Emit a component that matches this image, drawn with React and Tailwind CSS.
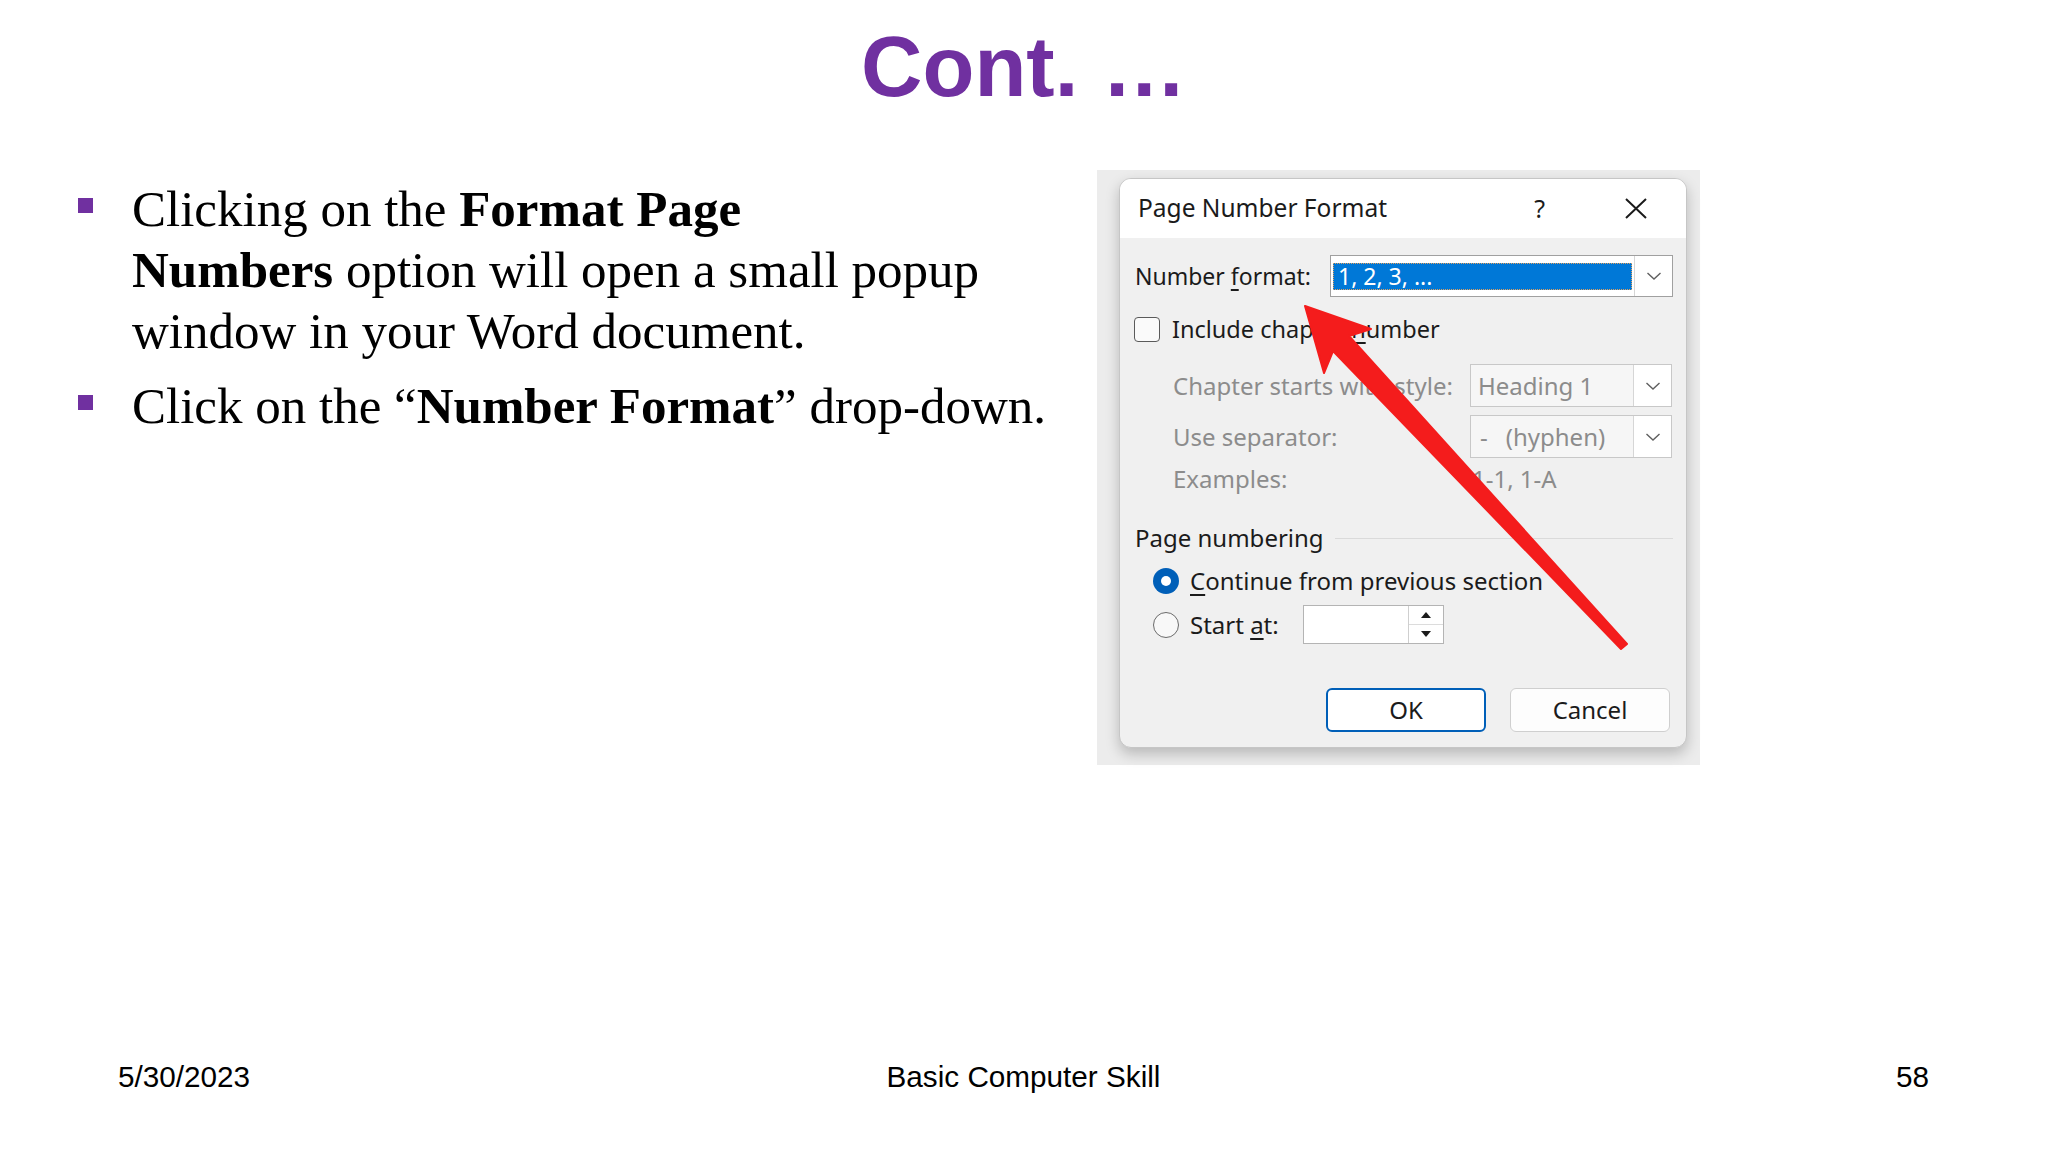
import React from 'react';

const Chevron = () => (
  <svg width="16" height="10" viewBox="0 0 16 10">
    <path d="M1.5 2 L8 8 L14.5 2" fill="none" stroke="#5f5f5f" strokeWidth="1.4" />
  </svg>
);

const SpinArrow = ({ up }) => (
  <svg width="10" height="6" viewBox="0 0 10 6">
    <path d={up ? 'M5 0 L10 6 L0 6 Z' : 'M0 0 L10 0 L5 6 Z'} fill="#1b1b1b" />
  </svg>
);

// red annotation arrow drawn over the dialog screenshot
const RedArrow = () => (
  <svg className="absolute inset-0 pointer-events-none" width="603" height="595" viewBox="0 0 603 595">
    <polygon
      points="208,136 274,159 252,166 530,474 524,479 236,181 227,203"
      fill="#f41c1c"
      strokeLinejoin="round"
      stroke="#f41c1c"
      strokeWidth="2"
    />
  </svg>
);

function Bullet({ children, className = '' }) {
  return (
    <li className={`flex ${className}`}>
      <span className="w-[15px] h-[15px] mt-[19px] bg-[#7030a0] shrink-0" />
      <span className="ml-[39px] whitespace-nowrap">{children}</span>
    </li>
  );
}

function PageNumberDialog() {
  return (
    <div className="relative w-[603px] h-[595px] bg-[#ececec] pl-[22px] pt-[8px]">
      <div className="w-[568px] h-[570px] rounded-[12px] border border-[#c6c6c6] bg-[#f0f0f0] overflow-hidden shadow-[0_6px_14px_rgba(0,0,0,0.22)] font-['Noto_Sans',sans-serif] text-[#1b1b1b] text-[24px] leading-none">
        {/* title bar */}
        <div className="h-[59px] bg-white flex items-center pl-[18px] pr-[39px]">
          <span className="text-[24.5px]">Page Number Format</span>
          <span className="ml-auto text-[25px]">?</span>
          <svg className="ml-[80px]" width="22" height="21" viewBox="0 0 22 21">
            <path d="M1 1 L21 20 M21 1 L1 20" stroke="#1b1b1b" strokeWidth="2" />
          </svg>
        </div>

        {/* number format */}
        <div className="mt-[17px] h-[42px] flex items-center pl-[15px] pr-[13px]">
          <span className="text-[23px]">
            Number <u className="underline-offset-4">f</u>ormat:
          </span>
          <div className="ml-auto w-[343px] h-[42px] border border-[#a0a0a0] bg-white flex items-center">
            <div className="ml-[2px] w-[299px] h-[27px] bg-[#0078d7] border border-dotted border-[#e0a060] text-white text-[23px] flex items-center pl-[4px]">
              1, 2, 3, ...
            </div>
            <div className="ml-auto w-[38px] h-full border-l border-[#d6d6d6] flex items-center justify-center">
              <Chevron />
            </div>
          </div>
        </div>

        {/* include chapter number */}
        <div className="mt-[20px] h-[25px] flex items-center pl-[14px]">
          <span className="w-[26px] h-[25px] rounded-[4px] border-[1.5px] border-[#5a5a5a] bg-[#fafafa]" />
          <span className="ml-[12px] text-[23.5px]">
            Include chapter <u className="underline-offset-4">n</u>umber
          </span>
        </div>

        {/* chapter style */}
        <div className="mt-[22px] h-[43px] flex items-center pl-[53px] pr-[14px] text-[#8c8c8c]">
          <span>Chapter starts with style:</span>
          <div className="ml-auto w-[202px] h-[43px] border border-[#c8c8c8] bg-[#f6f6f6] flex items-center">
            <span className="pl-[7px]">Heading 1</span>
            <div className="ml-auto w-[38px] h-full border-l border-[#d6d6d6] bg-white flex items-center justify-center">
              <Chevron />
            </div>
          </div>
        </div>

        {/* separator */}
        <div className="mt-[8px] h-[43px] flex items-center pl-[53px] pr-[14px] text-[#8c8c8c]">
          <span>Use separator:</span>
          <div className="ml-auto w-[202px] h-[43px] border border-[#c8c8c8] bg-[#f6f6f6] flex items-center">
            <span className="pl-[9px]">-</span>
            <span className="ml-[18px]">(hyphen)</span>
            <div className="ml-auto w-[38px] h-full border-l border-[#d6d6d6] bg-white flex items-center justify-center">
              <Chevron />
            </div>
          </div>
        </div>

        {/* examples */}
        <div className="mt-[6px] h-[30px] flex items-center pl-[53px] text-[#8c8c8c]">
          <span className="w-[299px]">Examples:</span>
          <span>1-1, 1-A</span>
        </div>

        {/* page numbering group */}
        <div className="mt-[29px] h-[30px] flex items-center pl-[15px] pr-[13px]">
          <span>Page numbering</span>
          <span className="flex-1 ml-[11px] h-px bg-[#dadada]" />
        </div>

        <div className="mt-[13px] h-[30px] flex items-center pl-[33px]">
          <span className="w-[26px] h-[26px] rounded-full bg-[#005fb8] flex items-center justify-center">
            <span className="w-[10px] h-[10px] rounded-full bg-white" />
          </span>
          <span className="ml-[11px]">
            <u className="underline-offset-4">C</u>ontinue from previous section
          </span>
        </div>

        <div className="mt-[9px] h-[39px] flex items-center pl-[33px]">
          <span className="w-[26px] h-[26px] rounded-full border-[1.5px] border-[#6b6b6b] bg-[#f8f8f8]" />
          <span className="ml-[11px] w-[113px]">
            Start <u className="underline-offset-4">a</u>t:
          </span>
          <div className="w-[141px] h-[39px] border border-[#b4b4b4] bg-white flex">
            <div className="ml-auto w-[35px] h-full border-l border-[#cfcfcf] flex flex-col">
              <div className="flex-1 flex items-center justify-center border-b border-[#dcdcdc]">
                <SpinArrow up />
              </div>
              <div className="flex-1 flex items-center justify-center">
                <SpinArrow />
              </div>
            </div>
          </div>
        </div>

        {/* buttons */}
        <div className="mt-[44px] h-[44px] flex justify-end gap-[24px] pr-[16px]">
          <button className="w-[160px] h-[44px] rounded-[6px] border-2 border-[#005fb8] bg-white text-[24px]">OK</button>
          <button className="w-[160px] h-[44px] rounded-[6px] border border-[#cfcfcf] bg-[#fdfdfd] text-[24px]">Cancel</button>
        </div>
      </div>
      <RedArrow />
    </div>
  );
}

export default function App() {
  return (
    <div className="w-[2048px] h-[1152px] bg-white flex flex-col overflow-hidden">
      <h1 className="pt-[24px] text-center text-[85px] leading-none font-bold text-[#7030a0] font-['Liberation_Sans',Arial,sans-serif]">
        Cont. …
      </h1>

      <div className="mt-[61px] flex items-start">
        <ul className="w-[1097px] pl-[78px] pt-[9px] text-[51px] leading-[61px] text-black font-['Liberation_Serif','Times_New_Roman',serif]">
          <Bullet>
            Clicking on the <b>Format Page</b>
            <br />
            <b>Numbers</b> option will open a small popup
            <br />
            window in your Word document.
          </Bullet>
          <Bullet className="mt-[14px]">
            Click on the “<b>Number Format</b>” drop-down.
          </Bullet>
        </ul>
        <PageNumberDialog />
      </div>

      <footer className="mt-auto mb-[59px] grid grid-cols-3 pl-[118px] pr-[119px] text-[29.7px] leading-[33px] text-black font-['Liberation_Sans',Arial,sans-serif]">
        <span>5/30/2023</span>
        <span className="text-center">Basic Computer Skill</span>
        <span className="text-right">58</span>
      </footer>
    </div>
  );
}
